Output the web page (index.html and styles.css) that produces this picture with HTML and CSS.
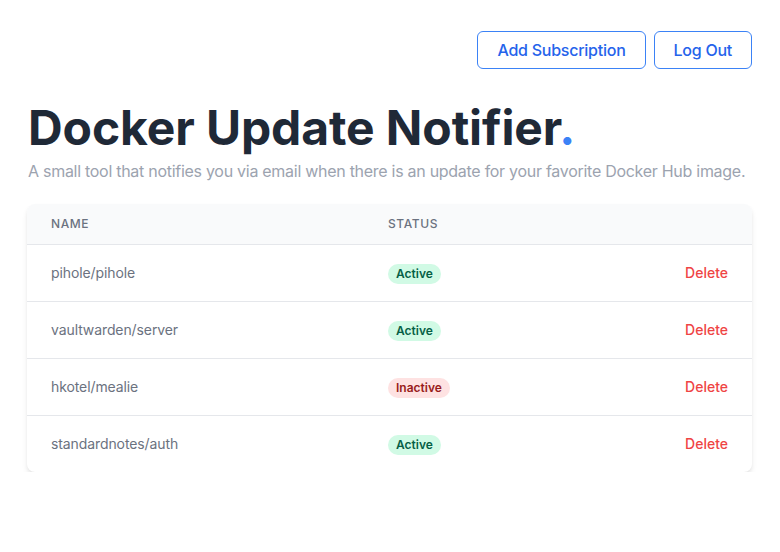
FILE: index.html
```html
<!DOCTYPE html>
<html lang="en">
<head>
<meta charset="utf-8">
<title>Docker Update Notifier</title>
<link rel="stylesheet" href="styles.css">
</head>
<body>
<div class="page">
  <div class="actions">
    <button class="btn">Add Subscription</button>
    <button class="btn">Log Out</button>
  </div>
  <h1 class="title">Docker Update Notifier<span class="dot">.</span></h1>
  <p class="subtitle">A small tool that notifies you via email when there is an update for your favorite Docker Hub image.</p>
  <div class="card">
    <div class="row head">
      <div class="cell">Name</div>
      <div class="cell">Status</div>
      <div class="cell"></div>
    </div>
    <div class="row">
      <div class="cell name">pihole/pihole</div>
      <div class="cell"><span class="badge active">Active</span></div>
      <div class="cell"><a class="delete">Delete</a></div>
    </div>
    <div class="row">
      <div class="cell name">vaultwarden/server</div>
      <div class="cell"><span class="badge active">Active</span></div>
      <div class="cell"><a class="delete">Delete</a></div>
    </div>
    <div class="row">
      <div class="cell name">hkotel/mealie</div>
      <div class="cell"><span class="badge inactive">Inactive</span></div>
      <div class="cell"><a class="delete">Delete</a></div>
    </div>
    <div class="row last">
      <div class="cell name">standardnotes/auth</div>
      <div class="cell"><span class="badge active">Active</span></div>
      <div class="cell"><a class="delete">Delete</a></div>
    </div>
  </div>
</div>
</body>
</html>
```

FILE: styles.css
```css
* { box-sizing: border-box; }
html, body { margin: 0; padding: 0; background: #ffffff; }
body {
  font-family: Inter, "Noto Sans", "Liberation Sans", sans-serif;
  color: #111827;
}
.page {
  padding: 31px 28px 0 27px;
}
.actions {
  display: flex;
  justify-content: flex-end;
  gap: 8px;
}
.btn {
  font-family: inherit;
  font-size: 16px;
  font-weight: 500;
  line-height: 24px;
  letter-spacing: -0.25px;
  color: #2563eb;
  background: #ffffff;
  border: 1px solid #3b82f6;
  border-radius: 6px;
  padding: 6px 19px;
  height: 38px;
}
.title {
  margin: 35px 0 0 1px;
  font-size: 48px;
  line-height: 48px;
  font-weight: 700;
  color: #1f2937;
  letter-spacing: -0.1px;
}
.dot { color: #3b82f6; }
.subtitle {
  margin: 7px 0 0 1px;
  font-size: 16px;
  line-height: 24px;
  color: #9ca3af;
  letter-spacing: -0.28px;
  white-space: nowrap;
}
.card {
  margin-top: 21px;
  border-radius: 8px;
  overflow: hidden;
  background: #ffffff;
  box-shadow: 0 4px 6px -1px rgba(0,0,0,0.1), 0 2px 4px -1px rgba(0,0,0,0.06);
}
.row {
  display: grid;
  grid-template-columns: 337px 1fr auto;
  align-items: center;
  height: 57px;
  border-bottom: 1px solid #e5e7eb;
}
.row.last { border-bottom: none; height: 56px; }
.row.head {
  height: 41px;
  background: #f9fafb;
}
.cell {
  padding: 0 24px;
  font-size: 14px;
  line-height: 20px;
  color: #6b7280;
}
.head .cell {
  font-size: 12px;
  font-weight: 500;
  text-transform: uppercase;
  letter-spacing: 0.05em;
  color: #6b7280;
  line-height: 16px;
}
.name { color: #6b7280; letter-spacing: -0.1px; }
.badge {
  display: inline-block;
  padding: 0 8px;
  font-size: 12px;
  line-height: 20px;
  font-weight: 600;
  border-radius: 9999px;
}
.badge.active { background: #d1fae5; color: #065f46; }
.badge.inactive { background: #fee2e2; color: #991b1b; }
.delete {
  color: #ef4444;
  font-weight: 500;
  font-size: 14px;
  cursor: pointer;
}
```
